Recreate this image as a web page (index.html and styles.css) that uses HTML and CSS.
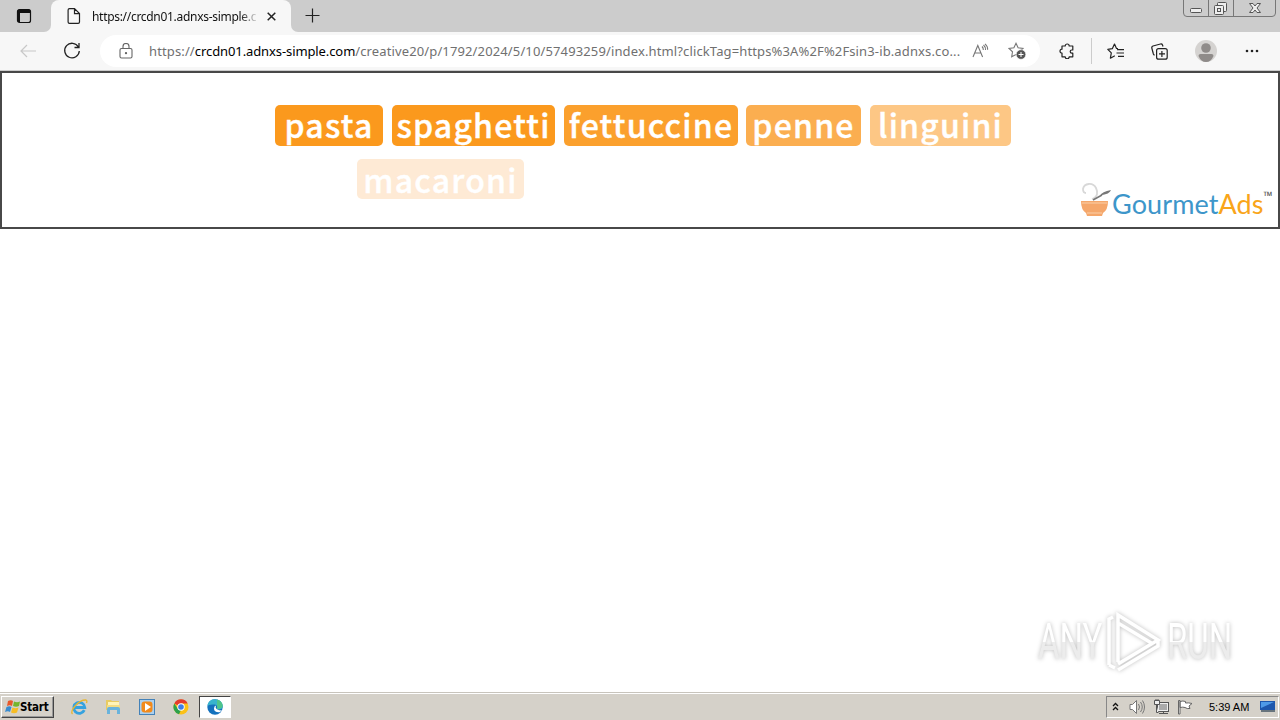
FILE: index.html
```html
<!DOCTYPE html>
<html lang="en">
<head>
  <meta charset="UTF-8" />
  <title>Browser</title>
  <link rel="stylesheet" href="styles.css">
</head>
<body>
  <header class="tabs">
    <div class="tab-menu">
      <svg width="16" height="16" viewBox="0 0 16 16"><rect x="1.5" y="1.5" width="13" height="13" rx="2" fill="none" stroke="#111" stroke-width="1.2"/><path d="M1.500 5V3q0-1.500 1.500-1.500h10q1.500 0 1.500 1.500v2zM2 5h2v9H2z" fill="#111"/></svg>
    </div>
    <div class="tab">
      <svg width="14" height="16" viewBox="0 0 14 16" fill="none" stroke="#222" stroke-width="1.200"><path d="M2.500.6h5l5 5v8.400q0 1.400-1.400 1.400H2.500Q1.100 15.400 1.100 14V2Q1.100.6 2.500.6zM7.500.6v5h5"/></svg>
      <span class="tab-title">https://crcdn01.adnxs-simple.c</span>
      <svg class="tab-close" width="9" height="9" viewBox="0 0 9 9" stroke="#222" stroke-width="1.500"><path d="M.7.7l7.600 7.600M8.300.7L.7 8.300"/></svg>
    </div>
    <div class="tab-rest">
      <svg class="new-tab" width="15" height="15" viewBox="0 0 15 15" stroke="#222" stroke-width="1.200"><path d="M.5 7.500h14M7.500.5v14"/></svg>
      <svg class="win-buttons" width="94" height="18" viewBox="0 0 94 18" fill="none" stroke="#777">
        <path d="M.5 0v13q0 3.500 3.500 3.500h85q3.500 0 3.500-3.500V0M25.500 0v16M50.500 0v16"/>
        <g stroke="#555"><rect x="7.500" y="8.500" width="11" height="4" rx="1" fill="#eee"/><rect x="34.500" y="2.500" width="9" height="9" rx="1" fill="#eee"/><rect x="31.500" y="5.500" width="9" height="9" rx="1" fill="#eee"/><rect x="34.500" y="8.500" width="3" height="3"/><path d="M66.500 3.500h3.500l2 2.500 2-2.500h3.500l-3.500 4.500 3.500 4.500H74l-2-2.500-2 2.500h-3.500L70 8z" fill="#eee"/></g>
      </svg>
    </div>
  </header>
  <div class="toolbar">
    <svg class="back" width="17" height="14" viewBox="0 0 17 14" fill="none" stroke="#c8c8c8" stroke-width="1.200"><path d="M16 7H1M7 1L1 7l6 6"/></svg>
    <svg class="reload" width="18" height="18" viewBox="0 0 18 18" fill="none" stroke="#222" stroke-width="1.300"><path d="M15.400 5A7.300 7.300 0 1 0 16.300 9M16 1v4.500h-4.500"/></svg>
    <div class="address">
      <svg class="lock" width="14" height="16" viewBox="0 0 14 16" fill="none" stroke="#666" stroke-width="1.100"><rect x="1" y="5.500" width="12" height="9.500" rx="1.500"/><path d="M4 5.500V3.500a3 3 0 0 1 6 0v2"/><circle cx="7" cy="10.200" r=".6" fill="#555"/></svg>
      <span class="url">https://<b>crcdn01.adnxs-simple.com</b>/creative20/p/1792/2024/5/10/57493259/index.html?clickTag=https%3A%2F%2Fsin3-ib.adnxs.co...</span>
      <svg class="read" width="17" height="16" viewBox="0 0 17 16" fill="none" stroke="#777" stroke-width="1.100"><path d="M1 14L5.800 2.500 10.600 14M2.800 10h6M10 3.500q1.500 1.500 1.300 3.500M11.500 2q2.300 2 2 5M13 .8q3 2.500 2.600 6"/></svg>
      <svg class="fav" width="19" height="18" viewBox="0 0 19 18"><path d="M8 1.300l2.100 4.400 4.900.7-3.600 3.400.8 4.900L8 12.500l-4.300 2.200.8-4.900L1 6.400l4.900-.7z" fill="none" stroke="#777" stroke-width="1.100"/><circle cx="13" cy="12.500" r="4.800" fill="#555" stroke="#fff" stroke-width=".6"/><path d="M10.500 12.500h5M13 10v5" stroke="#fff"/></svg>
    </div>
    <svg class="puzzle" width="16" height="16" viewBox="0 0 16 16" fill="none" stroke="#222" stroke-width="1.200" stroke-linejoin="round"><path d="M3 3h3.200a2 2 0 0 1 4 0h3.600v4h-1a1.600 1.600 0 0 0 0 3.200h1v3.600h-3.600a2 2 0 0 1-4 0H3v-3.600a2 2 0 0 1 0-4z"/></svg>
    <div class="divider"></div>
    <svg class="favorites" width="18" height="17" viewBox="0 0 18 17" fill="none" stroke="#222" stroke-width="1.200" stroke-linejoin="round"><path d="M11 5.600l-1.500-.2L7.500 1 5.300 5.700.8 6.400l3.500 3.500-.9 5.300 4.400-2.400M10 6.600h7M9.500 10h7.500M11 13.400h6"/></svg>
    <svg class="collections" width="17" height="17" viewBox="0 0 17 17" fill="none" stroke="#222" stroke-width="1.200"><rect x="5.600" y="5.600" width="10.600" height="10.600" rx="2"/><path d="M10.900 8v6M8 10.900h6M3.600 12.200q-.9-.2-1.200-1.200L.8 5Q.5 3.500 2 3L9.500 1q1.500-.3 2 1l.5 1.500"/></svg>
    <svg class="avatar" width="22" height="22" viewBox="0 0 22 22"><circle cx="11" cy="11" r="11" fill="#d5d3d1"/><circle cx="11" cy="8" r="4.800" fill="#8f8b89"/><path d="M3.500 16q0-2 2-2h11q2 0 2 2-2.500 6-7.500 6t-7.500-6z" fill="#8f8b89"/></svg>
    <svg class="more" width="14" height="4" viewBox="0 0 14 4" fill="#222"><circle cx="2" cy="2" r="1.300"/><circle cx="7" cy="2" r="1.300"/><circle cx="12" cy="2" r="1.300"/></svg>
  </div>
  <main class="page">
    <section class="ad">
      <div class="tags">
        <span class="tag pasta">pasta</span>
        <span class="tag spaghetti">spaghetti</span>
        <span class="tag fettuccine">fettuccine</span>
        <span class="tag penne">penne</span>
        <span class="tag linguini">linguini</span>
      </div>
      <div class="tags second">
        <span class="tag macaroni">macaroni</span>
      </div>
      <div class="logo">
        <svg width="32" height="37" viewBox="0 0 32 37" fill="none"><path d="M12 18c6-2 6-7 4-11C13 1 4 2 3 8c0 3 1 4 3 4" stroke="#d8d8d8" stroke-width="1.800"/><path d="M13 19l9-5" stroke="#777" stroke-width="1.500"/><path d="M20 14.500q2-4 11-5.500-1 4-11 5.500z" fill="#777"/><path d="M1 20h27q0 9-5 12l-1 3H7l-1-3Q1 29 1 20z" fill="#f5a76b"/><path d="M2 22h25M7 32h15" stroke="#fbd0aa" stroke-width="1"/></svg>
        <span class="brand">Gourmet<i>Ads</i></span><sup>™</sup>
      </div>
    </section>
  </main>
  <div class="watermark">
    <span class="any">ANY</span>
    <svg width="58" height="64" viewBox="0 0 58 64" fill="none" stroke="#fff" stroke-width="3.500"><path d="M4 55V9l4-2M4 55l6 3M13 52V5l40 25-40 24M13 13l35 21M13 60l40-24V30"/></svg>
    <span class="run">RUN</span>
  </div>
  <footer class="taskbar">
    <div class="start">
      <svg width="16" height="16" viewBox="0 0 16 16"><path d="M4 2q3-1.500 5 0L8 7Q6 5.500 3 7z" fill="#e8582a"/><path d="M10 2.500q3 1.500 6 0L15 7q-3 1.500-6 0z" fill="#75b52c"/><path d="M2.500 8q3-1.500 5 0L6 13Q4 11.500 1 13z" fill="#378bd0"/><path d="M8.500 8.500q3 1.500 6 0l-1.500 5q-3 1.500-6 0z" fill="#f7bd24"/></svg>
      <span>Start</span>
    </div>
    <svg class="ie" width="18" height="18" viewBox="0 0 18 18" fill="none"><path d="M14.300 12.200A5.500 5.500 0 1 1 14.800 9.500H5" stroke="#35a2df" stroke-width="2.800"/><path d="M2.500 16C-1 13 9 1.500 16 2q1.500.5.500 3" stroke="#e9b62e" stroke-width="1.300"/></svg>
    <svg class="explorer" width="16" height="16" viewBox="0 0 16 16"><path d="M1 1h5l1 1h7v9H1z" fill="#e8cb62"/><path d="M3 3h11v5H3z" fill="#fff4b8"/><path d="M2 6h13v5H2z" fill="#f3dc83"/><path d="M2 15v-5q0-2 2-2h9q2 0 2 2v5h-3v-4H5v4z" fill="#69b3dc"/></svg>
    <svg class="player" width="16" height="16" viewBox="0 0 16 16"><rect x=".5" y=".5" width="15" height="15" fill="#acd0ee" stroke="#4482b8"/><rect x="2.500" y="2.500" width="11" height="11" rx="3" fill="#f28a1b"/><path d="M6 4l6 4-6 4z" fill="#fff"/></svg>
    <svg class="chrome" width="16" height="16" viewBox="0 0 16 16"><circle cx="8" cy="8" r="7.500" fill="#fbc116"/><path d="M8 8L1.300 4.500a7.500 7.500 0 0 1 13.400 0H8z" fill="#e33b2e"/><path d="M1.300 4.500L5 10l3 1-2 4.300A7.500 7.500 0 0 1 1.300 4.500z" fill="#2ca14c"/><circle cx="8" cy="8" r="3.700" fill="#fff"/><circle cx="8" cy="8" r="2.800" fill="#3d7ee8"/></svg>
    <div class="task-active">
      <svg width="16" height="16" viewBox="0 0 16 16"><circle cx="8" cy="8" r="7.700" fill="#1471bd"/><path d="M.5 7C1 2 4.500.3 8 .3c5 0 8 3.700 7.700 7.200-.2 2.500-3 3.500-6 2.500 2-3-1-5-4-4.500C3 5.800 1 6 .5 7z" fill="#38b4cd"/><path d="M10 .6q5.500 1.500 5.700 6.500-.8 3.500-6 2.500 1-1.500.3-3z" fill="#4fc48a"/><path d="M9.500 10q-1.500-1.500-.5-3.500-2 .5-2 3 0 4 5.500 3.700l2.500-1.700q-3 0-5.500-1.500z" fill="#fff"/></svg>
    </div>
    <div class="tray">
      <svg class="chevrons" width="7" height="9" viewBox="0 0 7 9" fill="none" stroke="#111" stroke-width="1.300"><path d="M1 4l2.500-2.500L6 4M1 8l2.500-2.500L6 8"/></svg>
      <svg class="sound" width="17" height="16" viewBox="0 0 17 16" fill="#fff" stroke="#777"><path d="M1 5.500h2.500l4-4v13l-4-4H1z"/><path d="M9.500 5q2 3 0 6M11.500 3q3.500 5 0 10M13.500 1.500q4 6.500 0 13" fill="none"/></svg>
      <svg class="net" width="17" height="16" viewBox="0 0 17 16" fill="#eee" stroke="#555"><rect x="4.500" y="3.500" width="11" height="9"/><path d="M6 5h8v6H6z" fill="#aaa" stroke="none"/><path d="M6 14.500h9M10.500 12.500v2M3.500 6v7.500h2M1.500 1.500h5v4h-5zM3 0v2M5 0v2"/></svg>
      <svg class="flag" width="16" height="16" viewBox="0 0 16 16" fill="#fff" stroke="#666"><path d="M1.500 15V1.500h1.500V15zM3 2.500q3-1 5.500 0V4q3-.5 6.500.5L12 7l1 2.500q-3 .5-5-1-2-.7-5 0z"/></svg>
      <time>5:39 AM</time>
      <svg class="desktop" width="16" height="13" viewBox="0 0 16 13"><path d="M0 1h15v9H0z" fill="#1d57ad"/><path d="M1 2h13L1 8z" fill="#4e9ae8"/><path d="M1 10h14v2H1z" fill="#68747d"/></svg>
    </div>
  </footer>
</body>
</html>
```
FILE: styles.css
```css
* { box-sizing: border-box; }
body {
  margin: 0;
  width: 1280px;
  height: 720px;
  overflow: hidden;
  display: flex;
  flex-direction: column;
  background: #fff;
  font-family: "Noto Sans", sans-serif;
}
svg {
  display: block;
  flex: none;
}
.tabs {
  height: 32px;
  display: flex;
  background: linear-gradient(#ccc 24px, #f7f7f7 24px);
}
.tab-menu {
  width: 51px;
  padding: 8px 0 0 16px;
  background: #ccc;
  border-bottom-right-radius: 7px;
}
.tab {
  width: 240px;
  height: 32px;
  display: flex;
  align-items: center;
  padding-left: 16px;
  background: #f7f7f7;
  border-radius: 8px 8px 0 0;
}
.tab-title {
  width: 167px;
  margin-left: 11px;
  overflow: hidden;
  white-space: nowrap;
  font-size: 12px;
  color: #111;
  letter-spacing: -0.3px;
  -webkit-mask-image: linear-gradient(to right, #000 148px, transparent 167px);
}
.tab-close { margin-left: 8px; }
.tab-rest {
  flex: 1;
  display: flex;
  justify-content: space-between;
  padding: 0 3px 0 14px;
  background: #ccc;
  border-bottom-left-radius: 7px;
}
.new-tab { margin-top: 8px; }
.toolbar {
  height: 39px;
  display: flex;
  align-items: center;
  background: #f7f7f7;
  border-bottom: 1px solid #ccc;
}
.back { margin-left: 20px; }
.reload { margin-left: 26px; }
.address {
  width: 940px;
  height: 32px;
  margin-left: 19px;
  display: flex;
  align-items: center;
  background: #fff;
  border-radius: 16px;
}
.lock { margin-left: 19px; }
.url {
  width: 813px;
  margin-left: 16px;
  white-space: nowrap;
  font-size: 13px;
  letter-spacing: 0.13px;
  color: #707070;
}
.url b {
  font-weight: 400;
  letter-spacing: -0.1px;
  color: #000;
}
.read { margin-left: 10px; }
.fav { margin-left: 19px; }
.puzzle { margin-left: 19px; }
.divider {
  width: 1px;
  height: 26px;
  margin-left: 16px;
  background: #ccc;
}
.favorites { margin-left: 15px; }
.collections { margin-left: 26px; }
.avatar { margin-left: 27px; }
.more { margin-left: 28px; }
.page {
  flex: 1;
}
.ad {
  position: relative;
  height: 158px;
  padding-top: 32px;
  border: 2px solid #484848;
}
.tags {
  display: flex;
  padding-left: 273px;
}
.tag {
  height: 41px;
  border-radius: 5px;
  background: #fb991d;
  color: #fff;
  font-family: "Noto Sans CJK JP", sans-serif;
  font-weight: 500;
  font-size: 32px;
  line-height: 38px;
  letter-spacing: 1.2px;
  text-align: center;
  white-space: nowrap;
  -webkit-text-stroke: 0.4px #fff;
}
.pasta { width: 108px; }
.spaghetti { width: 163px; margin-left: 9px; }
.fettuccine { width: 174px; margin-left: 9px; background: #fba02d; }
.penne { width: 115px; margin-left: 8px; background: #fbae50; }
.linguini { width: 141px; margin-left: 9px; background: #fdc785; }
.second {
  margin-top: 13px;
  padding-left: 355px;
}
.macaroni {
  width: 167px;
  height: 40px;
  line-height: 40px;
  background: #feead5;
}
.logo {
  position: absolute;
  right: 6px;
  bottom: 6px;
  width: 192px;
  height: 40px;
  display: flex;
}
.brand {
  font-family: Lato, sans-serif;
  font-size: 27px;
  line-height: 46px;
  letter-spacing: 0.1px;
  color: #3d96ca;
}
.brand i {
  font-style: normal;
  color: #f9a51a;
}
.logo sup {
  font-size: 12px;
  line-height: 30px;
  color: #555;
}
.watermark {
  position: absolute;
  left: 1038px;
  top: 609px;
  width: 200px;
  display: flex;
  align-items: center;
  font-family: Roboto, sans-serif;
  font-size: 50px;
  line-height: 66px;
  filter: drop-shadow(0 0 2px #bbb);
}
.watermark span {
  width: 66px;
  transform-origin: left center;
  transform: scaleX(0.66);
  color: transparent;
  background: linear-gradient(#fff 50%, #ececec 50%);
  -webkit-background-clip: text;
  background-clip: text;
}
.watermark .any { width: 100px; margin-right: -34px; }
.watermark .run { width: 100px; flex: none; }
.watermark svg { margin-left: 3px; margin-right: 4px; }
.taskbar {
  height: 28px;
  display: flex;
  align-items: center;
  background: #d5d1c9;
  border-top: 1px solid #c8c4bc;
  box-shadow: inset 0 1px #fff;
}
.start {
  width: 53px;
  height: 22px;
  margin-left: 1px;
  padding-left: 2px;
  display: flex;
  align-items: center;
  border: 1px solid;
  border-color: #fff #444 #444 #fff;
  box-shadow: inset -1px -1px #999;
  font: bold 11.5px "DejaVu Sans Condensed", "DejaVu Sans", sans-serif;
  letter-spacing: -0.2px;
  color: #000;
}
.ie { margin-left: 16px; }
.explorer { margin-left: 17px; }
.player { margin-left: 18px; }
.chrome { margin-left: 18px; }
.task-active {
  width: 32px;
  height: 22px;
  margin-left: 10px;
  display: flex;
  align-items: center;
  justify-content: center;
  background: #fff;
  border: 1px solid;
  border-color: #444 #fff #fff #444;
}
.tray {
  width: 173px;
  height: 22px;
  margin-left: auto;
  margin-right: 1px;
  padding-left: 5px;
  display: flex;
  align-items: center;
  border: 1px solid;
  border-color: #888 #fff #fff #888;
}
.sound { margin-left: 10px; }
.net { margin-left: 7px; }
.flag { margin-left: 7px; }
.tray time {
  width: 43px;
  margin-left: 16px;
  font: 11px "Liberation Sans", sans-serif;
  white-space: nowrap;
}
.desktop { margin-left: 8px; }
```
